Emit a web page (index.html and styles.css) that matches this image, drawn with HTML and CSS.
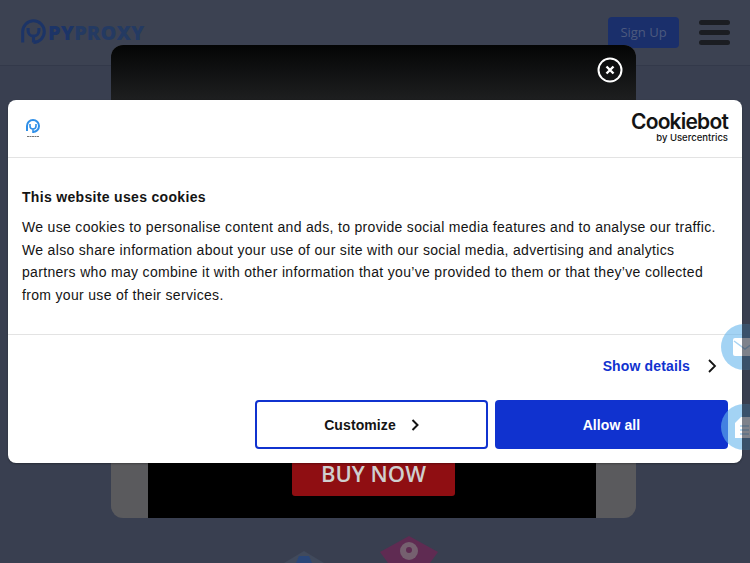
FILE: index.html
```html
<!DOCTYPE html>
<html lang="en">
<head>
    <meta charset="UTF-8">
    <meta name="viewport" content="width=device-width, initial-scale=1.0">
    <title>PYPROXY</title>
    <link rel="stylesheet" href="styles.css">
</head>
<body>
    <header class="site-header">
        <div class="brand">
            <svg class="brand-mark" width="27" height="27" viewBox="0 0 30 30" fill="none" stroke="#1c3467" stroke-width="3.4">
                <path d="M3 26V14A12 12 0 1 1 15 26"/>
                <path d="M9 10v3a6 6 0 0 0 12 0v-3M15 19v7"/>
            </svg>
            <span class="brand-py">PY</span><span class="brand-proxy">PROXY</span>
        </div>
        <div class="header-actions">
            <a class="signup" href="#">Sign Up</a>
            <div class="burger"><span></span><span></span><span></span></div>
        </div>
    </header>

    <div class="promo">
        <div class="promo-inner">
            <a class="buy-now" href="#">BUY NOW</a>
        </div>
        <svg class="promo-close" width="26" height="26" viewBox="0 0 26 26" fill="none" stroke="#fff">
            <circle cx="13" cy="13" r="11.500" stroke-width="2"/>
            <path d="M9.500 9.500l7 7M16.500 9.500l-7 7" stroke-width="2.400"/>
        </svg>
    </div>

    <div class="teasers">
        <svg width="44" height="14" viewBox="0 0 44 14"><path d="M2 14L22 2l20 12z" fill="#414a5c"/><path d="M14 14l3-7h10l3 7z" fill="#2a4678"/></svg>
        <svg width="62" height="28" viewBox="0 0 62 28"><path d="M31 1l29 16-8 11H10L2 17z" fill="#5f2b52"/><circle cx="31" cy="16" r="9" fill="#75606f"/><circle cx="31" cy="15" r="3" fill="#5f2b52"/></svg>
    </div>

    <div class="cookie-dialog">
        <div class="cookie-top">
            <svg class="cookie-logo" width="16" height="20" viewBox="0 0 16 20" fill="none" stroke="#2f8fe8" stroke-width="2">
                <path d="M2 13V8a6 6 0 1 1 6 6"/>
                <path d="M5 6v2a3 3 0 0 0 6 0V6M8 11v4" stroke-width="1.600"/>
                <path d="M2 18.500h12" stroke="#777" stroke-width="1.200" stroke-dasharray="2 .5"/>
            </svg>
            <div class="cookiebot">
                <div class="cookiebot-name">Cookiebot</div>
                <div class="cookiebot-by">by Usercentrics</div>
            </div>
        </div>
        <div class="cookie-body">
            <h2>This website uses cookies</h2>
            <p>We use cookies to personalise content and ads, to provide social media features and to analyse our traffic. We also share information about your use of our site with our social media, advertising and analytics partners who may combine it with other information that you’ve provided to them or that they’ve collected from your use of their services.</p>
        </div>
        <div class="cookie-footer">
            <div class="details-row">
                <a class="show-details" href="#">Show details</a>
                <svg width="10" height="14" viewBox="0 0 10 14" fill="none" stroke="#141414" stroke-width="1.800"><path d="M2 1l6 6-6 6"/></svg>
            </div>
            <div class="cookie-buttons">
                <button class="btn-customize">Customize
                    <svg width="8" height="12" viewBox="0 0 8 12" fill="none" stroke="#141414" stroke-width="2"><path d="M1.500 1l5 5-5 5"/></svg>
                </button>
                <button class="btn-allow">Allow all</button>
            </div>
        </div>
    </div>

    <div class="float-btn float-mail">
        <svg width="24" height="18" viewBox="0 0 24 18"><rect width="24" height="18" rx="2" fill="#fff"/><path d="M1 3l11 8 11-8" fill="none" stroke="#a9d4f2" stroke-width="1.500"/></svg>
    </div>
    <div class="float-btn float-doc">
        <svg width="20" height="21" viewBox="0 0 20 21"><path d="M6 0h14v21H0V6z" fill="#fff"/><path d="M5 9h9M5 13h9M5 17h9" stroke="#a9d4f2" stroke-width="1.500"/></svg>
    </div>
</body>
</html>
```

FILE: styles.css
```css
/* Basic reset */
* {
    margin: 0;
    padding: 0;
    box-sizing: border-box;
}

body {
    position: relative;
    width: 750px;
    height: 563px;
    overflow: hidden;
    font-family: "Liberation Sans", Arial, sans-serif;
    background-color: #393f50;
}

a {
    text-decoration: none;
}

/* Dimmed site header */
.site-header {
    display: flex;
    justify-content: space-between;
    align-items: center;
    height: 66px;
    padding: 0 20px 1px 20px;
    border-bottom: 1px solid #33394a;
    background-color: #3c4252;
}

.brand {
    display: flex;
    align-items: center;
    font-family: "Open Sans", sans-serif;
    font-size: 20px;
    font-weight: 800;
    letter-spacing: 0.1px;
}

.brand-mark {
    margin-right: 1px;
}

.brand-py {
    color: #1c3467;
}

.brand-proxy {
    color: #243a62;
}

.header-actions {
    display: flex;
    align-items: center;
    gap: 20px;
}

.signup {
    display: block;
    width: 71px;
    height: 31px;
    border-radius: 4px;
    background-color: #1a2f6b;
    color: #4d5a7e;
    font-family: "Open Sans", sans-serif;
    font-size: 13px;
    line-height: 31px;
    text-align: center;
}

.burger {
    display: flex;
    flex-direction: column;
    gap: 5px;
    width: 31px;
}

.burger span {
    height: 5px;
    border-radius: 3px;
    background-color: #1b1d22;
}

/* Promo popup behind the cookie dialog */
.promo {
    position: absolute;
    left: 111px;
    top: 45px;
    width: 525px;
    height: 473px;
    border-radius: 12px;
    overflow: hidden;
    background-color: #5a5a5d;
}

.promo-inner {
    display: flex;
    flex-direction: column;
    justify-content: flex-end;
    align-items: center;
    width: 448px;
    height: 100%;
    margin-left: 37px;
    padding: 0 0 22px 3px;
    background-color: #000;
}

.promo::before {
    content: "";
    position: absolute;
    left: 0;
    top: 0;
    width: 100%;
    height: 56px;
    background: linear-gradient(#040505, #1e1f20);
}

.buy-now {
    display: block;
    width: 163px;
    height: 56px;
    padding-top: 19px;
    border-radius: 3px;
    background-color: #8f0e12;
    color: #cfcfcf;
    font-family: "Open Sans", sans-serif;
    font-size: 22px;
    font-weight: 600;
    line-height: 28px;
    text-align: center;
}

.promo-close {
    position: absolute;
    left: 486px;
    top: 12px;
}

.teasers {
    position: absolute;
    left: 282px;
    top: 535px;
    display: flex;
    align-items: flex-end;
    gap: 52px;
    height: 28px;
}

/* Cookie dialog */
.cookie-dialog {
    position: absolute;
    left: 8px;
    top: 100px;
    width: 734px;
    height: 363px;
    border-radius: 8px;
    background-color: #fff;
    box-shadow: 0 1px 2px rgba(0, 0, 0, 0.3);
    color: #141414;
}

.cookie-top {
    display: flex;
    justify-content: space-between;
    align-items: center;
    height: 58px;
    padding: 0 14px 2px 17px;
    border-bottom: 1px solid #e3e3e3;
}

.cookiebot {
    text-align: right;
}

.cookiebot-name {
    font-family: "Inter", sans-serif;
    font-size: 21px;
    font-weight: 600;
    letter-spacing: -0.8px;
    line-height: 20px;
    color: #141414;
}

.cookiebot-by {
    margin-top: 1px;
    font-family: "Inter", sans-serif;
    font-size: 9.500px;
    font-weight: 500;
    line-height: 10px;
}

.cookie-body {
    height: 177px;
    padding: 30px 14px 0;
    border-bottom: 1px solid #e3e3e3;
}

.cookie-body h2 {
    margin-bottom: 10px;
    font-size: 14px;
    font-weight: 700;
    letter-spacing: 0.32px;
    line-height: 18px;
}

.cookie-body p {
    font-size: 14px;
    letter-spacing: 0.32px;
    line-height: 22.500px;
}

.cookie-footer {
    padding: 0 14px;
}

.details-row {
    display: flex;
    justify-content: flex-end;
    align-items: center;
    gap: 17px;
    height: 65px;
    padding-bottom: 4px;
    margin-right: 11px;
}

.show-details {
    color: #1032cf;
    font-size: 14px;
    font-weight: 700;
    letter-spacing: 0.15px;
}

.cookie-buttons {
    display: flex;
    justify-content: flex-end;
    gap: 7px;
}

.cookie-buttons button {
    display: flex;
    justify-content: center;
    align-items: center;
    width: 233px;
    height: 49px;
    border-radius: 4px;
    font-family: "Liberation Sans", Arial, sans-serif;
    font-size: 14px;
    font-weight: 700;
    letter-spacing: 0.1px;
}

.btn-customize {
    gap: 15px;
    border: 2px solid #1032cf;
    background-color: #fff;
    color: #141414;
}

.btn-allow {
    border: none;
    background-color: #1032cf;
    color: #fff;
}

/* Floating contact buttons, the part past the dialog stays dimmed */
.float-btn {
    position: absolute;
    left: 721px;
    width: 46px;
    height: 46px;
    display: flex;
    align-items: center;
    border-radius: 50%;
    background-color: rgba(102, 182, 236, 0.6);
    overflow: hidden;
}

.float-btn::after {
    content: "";
    position: absolute;
    left: 21px;
    top: 0;
    width: 25px;
    height: 100%;
    background-color: rgba(40, 46, 62, 0.6);
}

.float-mail {
    top: 324px;
    padding-left: 12px;
}

.float-doc {
    top: 404px;
    padding-left: 14px;
}
```
